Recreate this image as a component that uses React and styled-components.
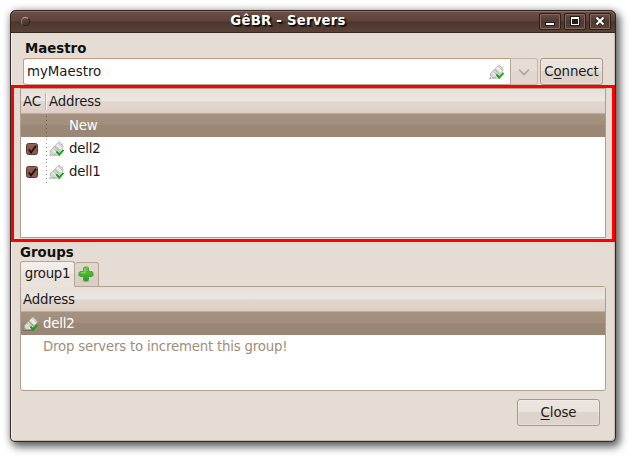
import React from "react";
import styled, { createGlobalStyle } from "styled-components";

const GlobalStyle = createGlobalStyle`
  * { box-sizing: border-box; }
  body {
    margin: 0;
    background: #fff;
    overflow: hidden;
    font: 13.33px/23px "DejaVu Sans", sans-serif;
    color: #1a1a1a;
  }
`;

const Desktop = styled.div`
  position: relative;
  width: 633px;
  height: 459px;
  padding: 10px 0 0 10px;
`;

const Window = styled.main`
  width: 606px;
  height: 432px;
  border: 1px solid #2f2a28;
  border-top: 0;
  border-radius: 6px 6px 5px 5px;
  background: #e5dcd3;
  box-shadow: inset -1px -1px #c6b9ae, inset 1px 0 #f3eeea,
    3px 4px 8px 1px rgba(0, 0, 0, 0.6), 0 0 8px rgba(0, 0, 0, 0.18);
`;

const TitleBar = styled.header`
  display: flex;
  align-items: center;
  height: 23px;
  margin: 0 -1px;
  padding: 0 4px 0 10px;
  border: 1px solid #35251f;
  border-radius: 6px 6px 0 0;
  background: linear-gradient(#6d4f44, #5e443a 45%, #4b372f 52%, #5a4138);
  box-shadow: inset 0 1px #907063;
`;

const MenuDot = styled.span`
  width: 9px;
  height: 9px;
  border: 1px solid #2c1d17;
  border-top-color: #b8a59c;
  border-left-color: #8f7a70;
  border-radius: 50%;
`;

const Title = styled.h1`
  flex: 1;
  margin: 0;
  padding: 0 0 2px 7px;
  text-align: center;
  font-size: 13.33px;
  letter-spacing: 0.2px;
  line-height: 18px;
  color: #fff;
  text-shadow: 1px 1px 1px #000, 2px 2px 1px rgba(0, 0, 0, 0.5);
`;

const WindowButtons = styled.div`
  display: flex;
  gap: 3px;
`;

const WindowButton = styled.button`
  display: block;
  width: 22px;
  height: 17px;
  padding: 0;
  border: 1px solid #2d1f19;
  border-radius: 2px;
  background: linear-gradient(#6a4c41, #4e3930 55%, #5c443a);
  box-shadow: inset 0 0 0 1px #80685e;
  svg { display: block; }
`;

const Body = styled.div`
  display: flex;
  flex-direction: column;
  padding: 4px 9px 0 9px;
`;

const Heading = styled.h2`
  height: ${(p) => p.$height}px;
  margin: ${(p) => p.$margin};
  font-size: 13.33px;
  line-height: ${(p) => p.$line || 22}px;
  font-weight: bold;
  color: #111;
`;

const Row = styled.div`
  display: flex;
  height: 27px;
  margin: 0 3px 3px;
`;

const Entry = styled.div`
  display: flex;
  align-items: center;
  justify-content: space-between;
  width: 488px;
  padding: 0 5px 0 3px;
  border: 1px solid #cf9680;
  border-bottom-color: #b8a595;
  border-right-color: #b8a595;
  border-radius: 3px 0 0 3px;
  background: #fff;
`;

const Dropdown = styled.button`
  display: flex;
  align-items: center;
  justify-content: center;
  width: 27px;
  margin-right: 2px;
  padding: 0;
  border: 1px solid #c6b8aa;
  border-left: 0;
  border-radius: 0 3px 3px 0;
  background: linear-gradient(#e6ddd5 50%, #e1d7ce 50%);
`;

const Button = styled.button`
  width: ${(p) => p.$width}px;
  height: 27px;
  padding: 1px 0;
  border: 1px solid #a99887;
  border-radius: 3px;
  background: linear-gradient(#ece5df, #e9e2dc 49%, #ded3ca 50%, #e0d4cb);
  box-shadow: inset 0 0 0 1px rgba(255, 255, 255, 0.25);
  font: inherit;
  letter-spacing: -0.1px;
  line-height: 22px;
  color: #1a1a1a;
  u { text-underline-offset: 2px; text-decoration-thickness: 1px; }
`;

const Panel = styled.section`
  height: ${(p) => p.$height}px;
  border: 1px solid #b09f8f;
  border-radius: ${(p) => (p.$rounded ? "0 3px 3px 3px" : "0")};
  background: #fff;
`;

const ListHeader = styled.div`
  display: flex;
  align-items: center;
  height: 25px;
  padding: 1px 0 0 2px;
  border-bottom: 1px solid #bfae9f;
  background: linear-gradient(#e7dfd8, #ece7e2 49%, #e1d8d0 50%, #decfc5);
`;

const ColumnTitle = styled.span`
  width: ${(p) => p.$width || "auto"};
  line-height: 23px;
  letter-spacing: -0.2px;
`;

const ColumnDivider = styled.i`
  width: 2px;
  height: 17px;
  margin-right: 2px;
  border-left: 1px solid #bfb0a3;
  border-right: 1px solid #f7f4f1;
`;

const ListRow = styled.div`
  display: flex;
  align-items: center;
  height: 23px;
  ${(p) => p.$selected && "background: linear-gradient(#a59281, #a18e7d 46%, #9a8775 48%, #998674);"}
  color: ${(p) => (p.$selected ? "#fff" : p.$muted ? "#a08d7c" : "#1a1a1a")};
`;

const CheckCell = styled.span`
  display: flex;
  align-items: center;
  width: 26px;
  height: 23px;
  padding: 1px 0 0 5px;
  margin-right: 2px;
  background: linear-gradient(${(p) => (p.$selected ? "#64574b" : "#999")} 1px, transparent 1px)
    right 0 top 2px / 1px 4px repeat-y;
`;

const IconCell = styled.span`
  display: flex;
  width: 16px;
  margin: 0 4px 0 ${(p) => p.$inset || 0}px;
`;

const Name = styled.span`
  height: 23px;
  line-height: 24px;
  white-space: nowrap;
  letter-spacing: -0.2px;
`;

const Grip = styled.div`
  height: 4px;
  width: 9px;
  margin: 0 auto;
  border-bottom: 1px dotted #a99b8f;
`;

const Tabs = styled.div`
  display: flex;
  align-items: flex-end;
  height: 26px;
  margin-bottom: -1px;
`;

const Tab = styled.button`
  position: relative;
  display: flex;
  align-items: center;
  justify-content: center;
  width: ${(p) => (p.$active ? 55 : 24)}px;
  height: ${(p) => (p.$active ? 26 : 25)}px;
  padding: ${(p) => (p.$active ? "0 0 1px" : "0 2px 1px 0")};
  border: 1px solid #b5a494;
  border-left-width: ${(p) => (p.$active ? 1 : 0)}px;
  border-bottom-color: ${(p) => (p.$active ? "#eae3dc" : "#b5a494")};
  border-radius: 3px 3px 0 0;
  background: ${(p) => (p.$active
    ? "linear-gradient(#f3efeb, #eee8e3 50%, #e9e1da 51%, #eae3dc)"
    : "linear-gradient(#e0d6cc 50%, #dacfc4 50%)")};
  font: inherit;
  letter-spacing: -0.3px;
  color: #1a1a1a;
`;

const Footer = styled.footer`
  display: flex;
  justify-content: flex-end;
  padding: 8px 6px 0 0;
`;

const Highlight = styled.div`
  position: absolute;
  left: 11px;
  top: 85px;
  width: 604px;
  height: 157px;
  border: 3px solid #f00;
  pointer-events: none;
`;

const Connected = () => (
  <svg width="16" height="16" viewBox="0 0 16 16">
    <path d="M0 14.3h11" stroke="#000" strokeOpacity=".25" />
    <path d="M1 13.8l2-1.6M9 2.5l2-2M12.6 4l1.6-1.6" stroke="#aaa" strokeWidth="1" />
    <path d="M6 4.7l3-2.9h2l3 3.4v1.6L11 9.5z" fill="#e6e6e4" stroke="#b0b0ad" strokeWidth=".8" />
    <path d="M1.5 9.5L5.5 5.5l5 5.2L7 13.5H3.2L1.5 11.8z" fill="#d9d9d7" stroke="#a6a6a3" strokeWidth=".8" />
    <path d="M3.5 8.5l4.5 4.5M8.5 3.8l4 4.2" stroke="#f8f8f8" strokeWidth=".9" />
    <path d="M5.8 5.2l5 5.2M4.7 7.4l4 4.1M10.2 2.8l3 3.3" stroke="#a9a9a6" strokeWidth=".7" />
    <path d="M7.3 10.5l2.9 3 4.3-4.7" fill="none" stroke="#12a512" strokeWidth="1.9" />
  </svg>
);

const Checked = () => (
  <svg width="13" height="13" viewBox="0 0 13 13">
    <rect x=".5" y=".5" width="11" height="11" rx="2" fill="#8c5b48" stroke="#593d31" />
    <path d="M1.5 2h9" stroke="#a77a67" strokeOpacity=".5" />
    <path d="M2.8 6.3l2.2 3.2L10 2.7" fill="none" stroke="#17100d" strokeWidth="1.7" />
  </svg>
);

const Add = () => (
  <svg width="16" height="16" viewBox="0 0 16 16">
    <defs>
      <linearGradient id="leaf" x1="0" y1="0" x2="0" y2="1">
        <stop stopColor="#6cc84a" />
        <stop offset="1" stopColor="#2d9a1c" />
      </linearGradient>
    </defs>
    <ellipse cx="8" cy="15" rx="4.5" ry=".8" fill="#000" opacity=".15" />
    <path
      d="M6.5 1h3l1 1v3.5H14l1 1v3l-1 1h-3.5V14l-1 1h-3l-1-1v-3.5H2l-1-1v-3l1-1h3.5V2z"
      fill="url(#leaf)"
      stroke="#3f9e2c"
      strokeWidth=".8"
      strokeLinejoin="round"
    />
    <path d="M7 2.5v4.3H2.8" fill="none" stroke="#b0ea94" strokeOpacity=".7" />
  </svg>
);

const glyphs = {
  Minimize: (
    <>
      <path d="M5 10h10" stroke="#2a1b16" strokeWidth="4" />
      <path d="M6 10h8" stroke="#fff" strokeWidth="2" />
    </>
  ),
  Maximize: (
    <>
      <rect x="5" y="2" width="10" height="10" fill="#2a1b16" />
      <path d="M6 3h8v8H6zM7 5v5h6V5z" fill="#fff" fillRule="evenodd" />
    </>
  ),
  Close: (
    <>
      <path d="M6.5 3.5l7 7M13.5 3.5l-7 7" stroke="#2a1b16" strokeWidth="4" />
      <path d="M6.5 3.5l7 7M13.5 3.5l-7 7" stroke="#fff" strokeWidth="2.2" />
    </>
  ),
};

const servers = ["dell2", "dell1"];

export default function App() {
  return (
    <Desktop>
      <GlobalStyle />
      <Window>
        <TitleBar>
          <MenuDot />
          <Title>GêBR - Servers</Title>
          <WindowButtons>
            {Object.entries(glyphs).map(([label, glyph]) => (
              <WindowButton key={label} aria-label={label}>
                <svg width="20" height="15">{glyph}</svg>
              </WindowButton>
            ))}
          </WindowButtons>
        </TitleBar>
        <Body>
          <Heading $height={21} $line={24} $margin="0 0 0 5px">Maestro</Heading>
          <Row>
            <Entry>
              <span>myMaestro</span>
              <Connected />
            </Entry>
            <Dropdown aria-label="Choose maestro">
              <svg width="12" height="8">
                <path d="M1 1.5l5 5 5-5" fill="none" stroke="#b3a394" strokeWidth="1.6" />
              </svg>
            </Dropdown>
            <Button $width={63}>C<u>o</u>nnect</Button>
          </Row>
          <Panel $height={150}>
            <ListHeader>
              <ColumnTitle $width="22px">AC</ColumnTitle>
              <ColumnDivider />
              <ColumnTitle>Address</ColumnTitle>
            </ListHeader>
            <ListRow $selected>
              <CheckCell $selected />
              <IconCell />
              <Name>New</Name>
            </ListRow>
            {servers.map((name) => (
              <ListRow key={name}>
                <CheckCell><Checked /></CheckCell>
                <IconCell><Connected /></IconCell>
                <Name>{name}</Name>
              </ListRow>
            ))}
          </Panel>
          <Grip />
          <Heading $height={19} $margin="0">Groups</Heading>
          <Tabs>
            <Tab $active>group1</Tab>
            <Tab aria-label="Add group"><Add /></Tab>
          </Tabs>
          <Panel $height={105} $rounded>
            <ListHeader>
              <ColumnTitle>Address</ColumnTitle>
            </ListHeader>
            <ListRow $selected>
              <IconCell $inset={2}><Connected /></IconCell>
              <Name>dell2</Name>
            </ListRow>
            <ListRow $muted>
              <IconCell $inset={2} />
              <Name>Drop servers to increment this group!</Name>
            </ListRow>
          </Panel>
          <Footer>
            <Button $width={83}><u>C</u>lose</Button>
          </Footer>
        </Body>
      </Window>
      <Highlight />
    </Desktop>
  );
}
